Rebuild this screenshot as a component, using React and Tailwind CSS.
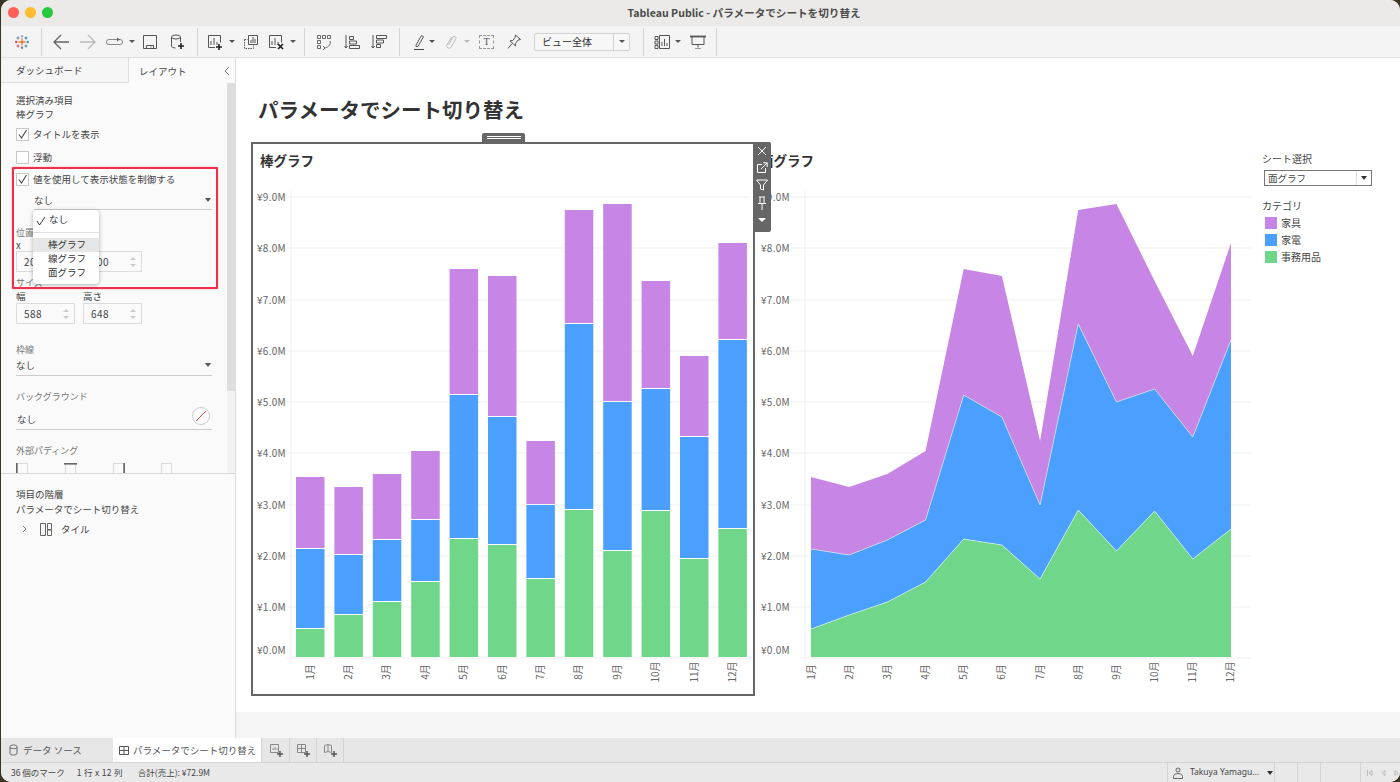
import React from 'react';

const MONTHS = ['1月', '2月', '3月', '4月', '5月', '6月', '7月', '8月', '9月', '10月', '11月', '12月'];
const GREEN = [629, 615, 602, 582, 539, 545, 579, 510, 551, 511, 559, 529];
const BLUE = [549, 555, 540, 520, 395, 417, 505, 324, 402, 389, 437, 340];
const PURPLE = [477, 487, 474, 451, 269, 276, 441, 210, 204, 281, 356, 243];
const BASE = 657;
const TICKS = [[9, 197], [8, 248], [7, 300], [6, 351], [5, 402], [4, 453], [3, 505], [2, 556], [1, 607], [0, 658]];

const C_PURPLE = '#c785e6';
const C_BLUE = '#4a9fff';
const C_GREEN = '#70d68a';
const FONT = '"Noto Sans CJK JP", "Noto Sans", sans-serif';

const Axes = ({ axisX, labelX, lineFrom, lineTo, firstX, step }) => (
  <g fontFamily={FONT} fontSize="10" fill="#666">
    {TICKS.map(([v, y]) => (
      <g key={v}>
        <line x1={v === 0 ? axisX - 5 : lineFrom} x2={lineTo} y1={y} y2={y} stroke="#efefef" />
        <text x={labelX} y={(v === 0 ? 650 : y) + 4} textAnchor="end" letterSpacing="0.3">{`¥${v}.0M`}</text>
      </g>
    ))}
    <line x1={axisX} x2={axisX} y1={190} y2={663} stroke="#efefef" />
    {MONTHS.map((m, i) => {
      const x = firstX + i * step;
      return (
        <text key={m} transform={`translate(${x + 3.5} 672) rotate(-90)`} textAnchor="middle">{m}</text>
      );
    })}
  </g>
);

const BarChart = () => (
  <svg viewBox="253 183 500 511" className="block w-[500px] h-[511px]">
    <Axes axisX={291} labelX={286} lineFrom={272} lineTo={750} firstX={310} step={38.4} />
    {MONTHS.map((m, i) => {
      const x = 296 + i * 38.4;
      return (
        <g key={m}>
          <rect x={x} y={PURPLE[i]} width="28.5" height={BLUE[i] - PURPLE[i] - 1} fill={C_PURPLE} />
          <rect x={x} y={BLUE[i]} width="28.5" height={GREEN[i] - BLUE[i] - 1} fill={C_BLUE} />
          <rect x={x} y={GREEN[i]} width="28.5" height={BASE - GREEN[i]} fill={C_GREEN} />
        </g>
      );
    })}
  </svg>
);

const AreaChart = () => {
  const xs = MONTHS.map((_, i) => 811 + i * 38.18);
  const line = (arr) => arr.map((y, i) => `${xs[i]},${y}`).join(' ');
  const rev = (arr) => arr.map((y, i) => `${xs[i]},${y}`).reverse().join(' ');
  return (
    <svg viewBox="757 183 500 511" className="block w-[500px] h-[511px] ml-[2px]">
      <Axes axisX={805} labelX={790} lineFrom={790} lineTo={1251} firstX={811} step={38.18} />
      <polygon points={`${line(PURPLE)} ${rev(BLUE)}`} fill={C_PURPLE} />
      <polygon points={`${line(BLUE)} ${rev(GREEN)}`} fill={C_BLUE} />
      <polygon points={`${line(GREEN)} ${xs[11]},${BASE} ${xs[0]},${BASE}`} fill={C_GREEN} />
      <polyline points={line(BLUE)} fill="none" stroke="#fff" strokeOpacity="0.5" />
      <polyline points={line(GREEN)} fill="none" stroke="#fff" strokeOpacity="0.5" />
    </svg>
  );
};

const Ico = ({ w = 16, h = 16, className = '', sw = 1, color = '#555', children }) => (
  <svg width={w} height={h} viewBox={`0 0 ${w} ${h}`} fill="none" stroke={color} strokeWidth={sw} className={`block shrink-0 ${className}`}>
    {children}
  </svg>
);

const Caret = ({ className = '', color = '#555' }) => (
  <span className={`block w-0 h-0 shrink-0 border-x-[3px] border-x-transparent border-t-[3px] ${className}`} style={{ borderTopColor: color }} />
);

const Divider = ({ className = '' }) => <span className={`block w-px h-[28px] bg-[#d4d4d4] shrink-0 ${className}`} />;

const BarsGlyph = () => <path d="M4 11V7M7 11V4M10 11V8" />;

const Toolbar = () => (
  <div className="flex items-center h-[32px] bg-[#f4f4f4] border-b border-[#e0e0e0] shrink-0 pl-[14px]">
    <Ico w={14} h={14}>
      <path d="M7 3.500v7M3.500 7h7" stroke="#e8762b" strokeWidth="1.300" />
      <path d="M7 0v2.500M5.800 1.200h2.400" stroke="#8a94a8" />
      <path d="M7 11.500V14M5.800 12.800h2.400" stroke="#5b6591" />
      <path d="M1.200 5.800v2.400M0 7h2.400" stroke="#c72035" />
      <path d="M12.800 5.800v2.400M11.600 7H14" stroke="#1f77b4" />
      <path d="M3 1.500v3M1.500 3h3" stroke="#59879b" />
      <path d="M11 1.500v3M9.500 3h3" stroke="#2f7fb8" />
      <path d="M3 9.500v3M1.500 11h3" stroke="#d0505f" />
      <path d="M11 9.500v3M9.500 11h3" stroke="#59879b" />
    </Ico>
    <Divider className="ml-[12px]" />
    <Ico w={17} className="ml-[11px]" sw={1.4} color="#666"><path d="M1 8h15M8 1L1 8l7 7" /></Ico>
    <Ico w={17} className="ml-[10px]" sw={1.4} color="#bbb"><path d="M0 8h15M8 1l7 7-7 7" /></Ico>
    <Ico w={20} className="ml-[8px]" color="#888">
      <rect x="1.500" y="5.500" width="16" height="5" rx="2.500" />
      <path d="M12 3.500L15 5.500 12 7.500z" fill="#666" stroke="none" />
    </Ico>
    <Caret className="ml-[4px]" />
    <Ico w={14} className="ml-[8px]" color="#555"><path d="M.5 1.500h13v13H.5zM3.500 14.500v-3h7v3M8 12.500v1" /></Ico>
    <Ico w={14} className="ml-[13px]" color="#555"><ellipse cx="6" cy="3" rx="4.500" ry="2" /><path d="M1.500 3v9c0 1 2 2 4 2M10.500 3v5" /><path d="M11 9v6M8 12h6" stroke="#222" strokeWidth="1.600" /></Ico>
    <Divider className="ml-[13px]" />
    <Ico className="ml-[9px]"><path d="M8 13.500H1.500v-12h12v7" /><BarsGlyph /><path d="M12 10v6M9 13h6" stroke="#222" strokeWidth="1.600" /></Ico>
    <Caret className="ml-[6px]" />
    <Ico className="ml-[8px]"><path d="M5.500 1.500h9v9h-9z" /><path d="M8 9V6M10 9V3M12 9V5" /><path d="M1.500 5.500h3M1.500 5.500v9h9v-3" strokeDasharray="1.500 1" /></Ico>
    <Ico className="ml-[9px]"><path d="M8 13.500H1.500v-12h12v7" /><BarsGlyph /><path d="M10 10l5 5M15 10l-5 5" stroke="#222" strokeWidth="1.700" /></Ico>
    <Caret className="ml-[6px]" />
    <Divider className="ml-[8px]" />
    <Ico className="ml-[11px]" color="#666"><path d="M1.500 1.500h3v3h-3zM6.500 1.500h3v3h-3zM11.500 1.500h3v3h-3zM1.500 6.500h3v3h-3zM1.500 11.500h3v3h-3z" /><path d="M14 7c1 3-1 6-5 7M7 12l2 2-2 2" /></Ico>
    <Ico className="ml-[12px]"><path d="M2 1v13M0.500 12L2 14l1.500-2M5.500 2.500h4v3h-4zM5.500 7h7v3h-7zM5.500 11.500h10v3h-10z" /></Ico>
    <Ico className="ml-[11px]"><path d="M2 1v13M0.500 12L2 14l1.500-2M5.500 1.500h10v3h-10zM5.500 6h7v3h-7zM5.500 10.500h4v3h-4z" /></Ico>
    <Divider className="ml-[12px]" />
    <Ico w={12} className="ml-[13px]"><path d="M3 11L8.500 1.500l2 1.200L5 12.500H3z" /><path d="M1 15.500h10" stroke="#444" /></Ico>
    <Caret className="ml-[4px]" />
    <Ico w={12} className="ml-[10px]" color="#bbb"><path d="M3.500 11l4.500-8a1.800 1.800 0 0 1 3 1.800L5.800 13.500a2.400 2.400 0 0 1-4-2.500L6.800 3" /></Ico>
    <Caret className="ml-[7px]" color="#bbb" />
    <span className="ml-[9px] w-[15px] h-[14px] border border-dashed border-[#999] flex items-center justify-center text-[10px] leading-none text-[#555] font-['Liberation_Serif',serif]">T</span>
    <Ico w={14} className="ml-[13px]"><path d="M8.500 1L13.500 5.500 11 6 8.500 9.500 8.500 12 3 6.800 5.800 6.500 8 3.500zM5 9.500L1 14.500" /></Ico>
    <div className="ml-[13px] w-[96px] h-[18px] flex items-center border border-[#d2d2d2] bg-[#f7f7f7] rounded-[2px] text-[10px] text-[#333] pl-[7px]">
      <span className="flex-1">ビュー全体</span>
      <span className="w-[16px] h-full border-l border-[#d2d2d2] flex items-center justify-center"><Caret /></span>
    </div>
    <Divider className="ml-[13px]" />
    <Ico className="ml-[10px]"><path d="M1 2.500h3v3H1zM1 7h3v3H1zM1 11.500h3v3H1zM5.500 1.500h10v13h-10z" /><path d="M8 12V8M10.500 12V5M13 12V9" /></Ico>
    <Caret className="ml-[5px]" />
    <Ico className="ml-[9px]"><path d="M0 2.500h16" strokeWidth="1.800" /><path d="M2 2.500v8h12v-8M8 10.500v3" /><path d="M5 14.500h6" stroke="#999" /></Ico>
    <Divider className="ml-[10px]" />
  </div>
);

const Check = ({ checked }) => (
  <span className="w-[13px] h-[13px] border border-[#c8c8c8] bg-white shrink-0 flex items-center justify-center">
    {checked && (
      <svg width="11" height="11" viewBox="0 0 11 11" fill="none" stroke="#444" strokeWidth="1.100"><path d="M2 5.500l2.500 3.500L9.500 1" /></svg>
    )}
  </span>
);

const CheckRow = ({ checked, label, className = '' }) => (
  <div className={`flex items-center gap-[4px] h-[14px] ${className}`}>
    <Check checked={checked} />
    <span>{label}</span>
  </div>
);

const Spinner = ({ value, className = '' }) => (
  <div className={`w-[59px] h-[21px] border border-[#dcdcdc] flex items-center text-[10px] pl-[7px] text-[#444] ${className}`}>
    <span className="flex-1 tracking-[0.5px]">{value}</span>
    <span className="w-[16px] h-full flex flex-col items-center justify-center gap-[4px]">
      <span className="block w-0 h-0 border-x-[3px] border-x-transparent border-b-[3px] border-b-[#ccc]" />
      <span className="block w-0 h-0 border-x-[3px] border-x-transparent border-t-[3px] border-t-[#ccc]" />
    </span>
  </div>
);

const UnderSelect = ({ label, className = '' }) => (
  <div className={`flex items-center justify-between border-b border-[#ccc] ${className}`}>
    <span>{label}</span>
    <Caret className="mr-[1px] border-x-[3px] border-t-[4px]" />
  </div>
);

const PadIcon = ({ side }) => (
  <svg width="13" height="12" viewBox="0 0 13 12" fill="none" stroke="#bbb" strokeDasharray="1 1">
    <path d="M1.500 .5h10v12h-10z" />
    {side === 'l' && <path d="M.8 0v12" stroke="#666" strokeWidth="1.600" strokeDasharray="none" />}
    {side === 't' && <path d="M0 .8h13" stroke="#666" strokeWidth="1.600" strokeDasharray="none" />}
    {side === 'r' && <path d="M12.200 0v12" stroke="#666" strokeWidth="1.600" strokeDasharray="none" />}
    {side === 'b' && <path d="M0 11.500h13" stroke="#666" strokeWidth="1" strokeDasharray="none" />}
  </svg>
);

const LeftPanel = () => (
  <div className="relative w-[235px] shrink-0 bg-[#fafafa] flex flex-col text-[9.5px] leading-[14px] text-[#444]">
    <div className="flex h-[25px] shrink-0">
      <div className="w-[128px] bg-[#f5f5f5] border-r border-b border-[#dedede] pl-[15px] flex items-center text-[#444]">ダッシュボード</div>
      <div className="flex-1 flex items-center pl-[10px] justify-between pr-[6px]">
        <span>レイアウト</span>
        <svg width="7" height="10" viewBox="0 0 7 10" fill="none" stroke="#777"><path d="M6 1L2 5l4 4" /></svg>
      </div>
    </div>
    <div className="flex h-[391px] shrink-0 border-b border-[#d8d8d8] overflow-hidden">
      <div className="flex-1 pl-[15px] pr-[15px] pt-[11px]">
        <div className="leading-[13px]">選択済み項目</div>
        <div>棒グラフ</div>
        <CheckRow checked label="タイトルを表示" className="mt-[6px]" />
        <CheckRow label="浮動" className="mt-[9px]" />
        <CheckRow checked label="値を使用して表示状態を制御する" className="mt-[8px]" />
        <UnderSelect label="なし" className="ml-[18px] mt-[6px] h-[18px] pb-[2px]" />
        <div className="mt-[17px] text-[9px] leading-[12px] text-[#777]">位置</div>
        <div className="leading-[12px]">x</div>
        <div className="flex gap-[8px]">
          <Spinner value="20" />
          <Spinner value="100" />
        </div>
        <div className="mt-[5px] text-[9px] leading-[12px] text-[#777]">サイズ</div>
        <div className="flex gap-[8px] mt-[1px] leading-[13px]">
          <span className="w-[59px]">幅</span>
          <span>高さ</span>
        </div>
        <div className="flex gap-[8px]">
          <Spinner value="588" />
          <Spinner value="648" />
        </div>
        <div className="mt-[20px] text-[9px] leading-[12px] text-[#777]">枠線</div>
        <UnderSelect label="なし" className="h-[20px] pb-[1px]" />
        <div className="mt-[15px] text-[9px] leading-[12px] text-[#777]">バックグラウンド</div>
        <div className="flex items-center justify-between border-b border-[#ccc] h-[27px] pl-[1px]">
          <span className="mt-[5px]">なし</span>
          <svg width="18" height="18" viewBox="0 0 18 18" fill="none" className="mr-[2px]">
            <circle cx="9" cy="9" r="8.500" stroke="#ccc" fill="#fff" />
            <path d="M4 14L14 4" stroke="#f04050" />
          </svg>
        </div>
        <div className="mt-[15px] text-[9px] leading-[12px] text-[#777]">外部パディング</div>
        <div className="flex mt-[6px] gap-[35px]">
          <PadIcon side="l" />
          <PadIcon side="t" />
          <PadIcon side="r" />
          <PadIcon side="b" />
        </div>
      </div>
      <div className="w-[9px] shrink-0 bg-[#f3f3f3]">
        <div className="h-[308px] bg-[#dedede]" />
      </div>
    </div>
    <div className="pl-[15px] pt-[13px] leading-[15px]">
      <div>項目の階層</div>
      <div>パラメータでシート切り替え</div>
      <div className="flex items-center mt-[4px] h-[16px] pl-[6px]">
        <svg width="5" height="8" viewBox="0 0 5 8" fill="none" stroke="#777"><path d="M1 1l3 3-3 3" /></svg>
        <svg width="12" height="13" viewBox="0 0 12 13" fill="none" stroke="#666" className="ml-[13px]"><path d="M.5.5h5v12h-5zM7.500.5h4v6h-4zM7.500 7h4v5.500h-4z" /></svg>
        <span className="ml-[9px]">タイル</span>
      </div>
    </div>

    {/* red highlight drawn over the screenshot */}
    <div className="absolute left-[11px] top-[109px] w-[206px] h-[122px] border-2 border-[#f0304a] rounded-[1px] shadow-[0_0_2px_rgba(240,48,74,0.4)]" />
    <div className="absolute left-[32px] top-[152px] w-[66px] h-[74px] bg-white rounded-[4px] shadow-[0_1px_4px_rgba(0,0,0,0.3)] text-[#333]">
      <div className="h-[20px] flex items-center pl-[16px] pb-[2px] relative">
        <svg width="12" height="12" viewBox="0 0 12 12" fill="none" stroke="#333" className="absolute left-[2px] top-[5px]"><path d="M2 6l2.500 4L10 2" /></svg>
        なし
      </div>
      <div className="mt-[2px] h-px bg-[#e0e0e0]" />
      <div className="mt-[5px] h-[14px] pl-[15px] pb-[2px] bg-[#e6e6e6] flex items-center">棒グラフ</div>
      <div className="h-[14px] pl-[15px] pb-[2px] flex items-center">線グラフ</div>
      <div className="h-[14px] pl-[15px] pb-[2px] flex items-center">面グラフ</div>
    </div>
  </div>
);

const LegendItem = ({ color, label }) => (
  <div className="flex items-center gap-[4px] h-[17px] ml-[3px]">
    <span className="w-[12px] h-[12px]" style={{ backgroundColor: color }} />
    <span>{label}</span>
  </div>
);

const Dashboard = () => (
  <div className="relative flex-1 min-w-0 flex flex-col border-l border-[#dcdcdc] -ml-px">
    <div className="h-[654px] bg-white pl-[15px] shrink-0">
      <div className="h-[84px] pl-[7px] pt-[36px] text-[20.500px] leading-[30px] font-bold text-[#333]">パラメータでシート切り替え</div>
      <div className="flex items-start">
        <div className="relative w-[504px] h-[554px] border-2 border-[#666] shrink-0">
          <div className="h-[39px] pl-[7px] pt-[6px] text-[13.500px] leading-[20px] font-bold text-[#333]">棒グラフ</div>
          <BarChart />
          <div className="absolute left-[229px] top-[-11px] w-[43px] h-[9px] bg-[#666] rounded-t-[2px] flex flex-col items-center justify-center gap-[1px]">
            <span className="block w-[34px] h-px bg-white" />
            <span className="block w-[34px] h-px bg-white" />
          </div>
          <div className="absolute left-[500px] top-[-2px] w-[18px] h-[90px] bg-[#666] rounded-r-[2px] flex flex-col items-center pt-[3px] gap-[5px] z-10">
            <Ico w={12} h={12} color="#fff"><path d="M2 2l8 8M10 2l-8 8" /></Ico>
            <Ico w={12} h={12} color="#fff"><path d="M6 2.500H1.500v8h8V6M5 7l6-6M7 .8h4.200V5" /></Ico>
            <Ico w={12} h={12} color="#fff"><path d="M.5 1h11L7.500 6v5l-3-1V6z" /></Ico>
            <Ico w={12} h={14} color="#fff"><path d="M3 1h6M4 1v6M8 1v6M2 7.500h8M6 7.500V14" /></Ico>
            <span className="block mt-[3px] w-0 h-0 border-x-[4px] border-x-transparent border-t-[4px] border-t-white" />
          </div>
        </div>
        <div className="w-[503px] shrink-0 pt-[2px]">
          <div className="h-[39px] pl-[5px] pt-[6px] text-[13.500px] leading-[20px] font-bold text-[#333]">面グラフ</div>
          <AreaChart />
        </div>
        <div className="pl-[4px] pt-[10px] text-[10px] leading-[14px] text-[#444]">
          <div>シート選択</div>
          <div className="mt-[4px] ml-[2px] w-[108px] h-[16px] border border-[#777] flex items-center pl-[3px] text-[9.500px]">
            <span className="flex-1">面グラフ</span>
            <span className="w-[15px] h-full border-l border-[#ddd] flex items-center justify-center"><Caret className="border-t-[4px]" color="#333" /></span>
          </div>
          <div className="mt-[13px] mb-[1px]">カテゴリ</div>
          <LegendItem color={C_PURPLE} label="家具" />
          <LegendItem color={C_BLUE} label="家電" />
          <LegendItem color={C_GREEN} label="事務用品" />
        </div>
      </div>
    </div>
    <div className="flex-1 bg-[#f5f5f5]" />
  </div>
);

const BottomBars = () => (
  <>
    <div className="h-[25px] shrink-0 bg-[#e6e6e6] border-b border-[#d4d4d4] flex text-[9.500px] text-[#555]">
      <div className="w-[112px] flex items-center pl-[8px] gap-[5px]">
        <Ico w={9} h={12} color="#666"><path d="M1 2.500c0-2 7-2 7 0v7c0 2-7 2-7 0zM1 3.500c0 1.500 7 1.500 7 0" /></Ico>
        <span>データ ソース</span>
      </div>
      <div className="w-[149px] bg-white flex items-center pl-[6px] gap-[3px] border-r border-[#d4d4d4]">
        <Ico w={11} h={11} color="#555"><path d="M.5 1.500h9v8h-9zM5 1.500v8M.5 5.500h9" /></Ico>
        <span className="whitespace-nowrap">パラメータでシート切り替え</span>
      </div>
      <div className="w-[28px] border-r border-[#d4d4d4] flex items-center justify-center">
        <Ico w={14} h={14} color="#888"><path d="M1.500 1.500h8v8h-8zM4 7V5M6 7V4M8 7V5.500" /><path d="M11 8v6M8 11h6" stroke="#555" strokeWidth="1.500" /></Ico>
      </div>
      <div className="w-[27px] border-r border-[#d4d4d4] flex items-center justify-center">
        <Ico w={14} h={14} color="#888"><path d="M1.500 1.500h8v8h-8zM5.500 1.500v8M1.500 5.500h8" /><path d="M11 8v6M8 11h6" stroke="#555" strokeWidth="1.500" /></Ico>
      </div>
      <div className="w-[27px] border-r border-[#d4d4d4] flex items-center justify-center">
        <Ico w={14} h={14} color="#888"><path d="M1.500 2.500l3.500-1 3.500 1v7l-3.500-1-3.500 1zM5 1.500v7" /><path d="M11 8v6M8 11h6" stroke="#555" strokeWidth="1.500" /></Ico>
      </div>
    </div>
    <div className="h-[19px] shrink-0 bg-[#e9e9e9] flex items-center text-[8.500px] text-[#444] pl-[10px]">
      <span>36 個のマーク</span>
      <span className="ml-[12px] tracking-[0.3px]">1 行 x 12 列</span>
      <span className="ml-[15px]">合計(売上): ¥72.9M</span>
      <div className="ml-auto flex h-full items-center">
        <div className="w-[108px] h-full border-x border-[#d4d4d4] flex items-center pl-[5px]">
          <Ico w={10} h={12} color="#666"><path d="M3 3a2 2 0 1 0 4 0a2 2 0 1 0-4 0M.5 11.500v-2c0-2 2-3 4.500-3s4.500 1 4.500 3v2z" /></Ico>
          <span className="ml-[7px] whitespace-nowrap font-['Noto_Sans',sans-serif]">Takuya Yamagu...</span>
          <Caret className="ml-[8px] border-t-[4px]" color="#333" />
        </div>
        <div className="w-[23px] h-full border-r border-[#d4d4d4]" />
        <div className="w-[23px] h-full border-r border-[#d4d4d4]" />
        <div className="w-[40px] h-full border-r border-[#d4d4d4]" />
        <div className="w-[39px] h-full flex items-center gap-[8px] pl-[6px] overflow-hidden">
          <Ico w={6} h={8} color="#bbb"><path d="M.5 1v6M5 1.500L2 4l3 2.500z" /></Ico>
          <Ico w={5} h={8} color="#bbb"><path d="M4 1.500L1 4l3 2.500z" /></Ico>
          <Ico w={5} h={8} color="#bbb"><path d="M1 1.500L4 4 1 6.500z" /></Ico>
        </div>
      </div>
    </div>
  </>
);

const App = () => (
  <div className="h-[782px] w-[1400px] overflow-hidden bg-[#3a3420] pl-px" style={{ fontFamily: FONT }}>
    <div className="h-full bg-[#fafafa] rounded-[10px] flex flex-col overflow-hidden">
      <div className="relative h-[26px] shrink-0 bg-[#ebeae8] flex items-center justify-center">
        <div className="absolute left-[7px] top-[7px] flex gap-[6px]">
          <span className="w-[11px] h-[11px] rounded-full bg-[#ff5f57]" />
          <span className="w-[11px] h-[11px] rounded-full bg-[#febc2e]" />
          <span className="w-[11px] h-[11px] rounded-full bg-[#28c840]" />
        </div>
        <span className="text-[10.600px] font-bold text-[#4a4a4a] ml-[87px]">Tableau Public - パラメータでシートを切り替え</span>
      </div>
      <Toolbar />
      <div className="flex-1 min-h-0 flex">
        <LeftPanel />
        <Dashboard />
      </div>
      <BottomBars />
    </div>
  </div>
);

export default App;
